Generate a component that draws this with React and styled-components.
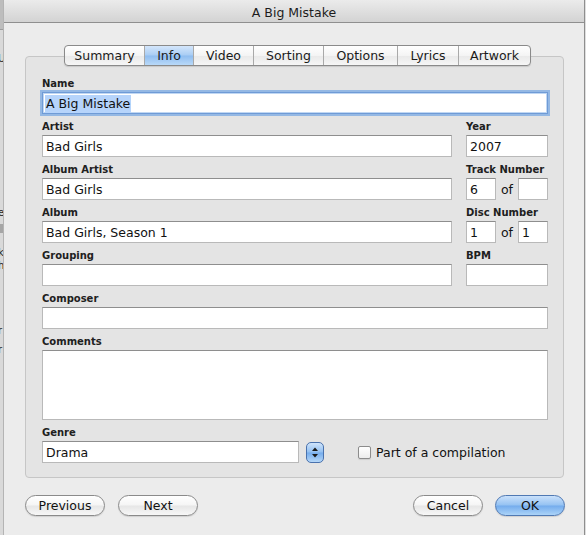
import React from "react";
import styled, { createGlobalStyle } from "styled-components";

const GlobalStyle = createGlobalStyle`
  html, body {
    margin: 0;
    padding: 0;
  }
  body {
    width: 586px;
    height: 535px;
    overflow: hidden;
    font-family: "DejaVu Sans", "Liberation Sans", sans-serif;
    color: #111111;
    background: #d4d4d4;
  }
`;

const Screen = styled.div`
  display: flex;
  width: 586px;
  height: 535px;
  overflow: hidden;
`;

const BackLeft = styled.div`
  width: 3px;
  flex: none;
  display: flex;
  flex-direction: column;
  overflow: hidden;
  background: #d9d9d9;
  border-right: 1px solid #b4b4b4;
`;

const BackRow = styled.div`
  height: ${(p) => p.$h}px;
  flex: none;
  background: ${(p) => p.$bg || "transparent"};
  border-bottom: ${(p) => (p.$line ? "1px solid #9c9c9c" : "none")};
  font-size: 10px;
  line-height: ${(p) => p.$h}px;
  white-space: nowrap;
  overflow: hidden;
  margin-left: -2px;
  color: #222222;
`;

const BackRight = styled.div`
  width: 1px;
  flex: none;
  background: #dedede;
  border-left: 1px solid #8e8e8e;
`;

const Dialog = styled.div`
  flex: 1;
  display: flex;
  flex-direction: column;
  background: #ececec;
`;

const TitleBar = styled.div`
  height: 20px;
  padding-top: 2px;
  flex: none;
  display: flex;
  align-items: center;
  justify-content: center;
  border-bottom: 1px solid #8f8f8f;
  border-radius: 4px 4px 0 0;
  background: linear-gradient(#ebebeb, #d3d3d3);
  font-size: 12.5px;
  color: #1c1c1c;
`;

const Body = styled.div`
  display: flex;
  flex-direction: column;
  padding: 22px 19px 0 21px;
`;

const TabBar = styled.div`
  position: relative;
  z-index: 1;
  align-self: flex-start;
  display: flex;
  height: 21px;
  box-sizing: border-box;
  margin: 0 0 -10px 39px;
  border: 1px solid #8a8a8a;
  border-radius: 4px;
  overflow: hidden;
  background: linear-gradient(#ffffff, #f4f4f4 50%, #e9e9e9 51%, #f6f6f6);
  box-shadow: 0 1px 1px rgba(0, 0, 0, 0.12);
`;

const Tab = styled.div`
  width: ${(p) => p.$w}px;
  box-sizing: border-box;
  display: flex;
  align-items: center;
  justify-content: center;
  font-size: 12.5px;
  color: #1a1a1a;
  border-left: ${(p) => (p.$first ? "none" : "1px solid #a9a9a9")};
  background: ${(p) =>
    p.$active
      ? "linear-gradient(#d4e6fb, #a9cdf4 48%, #8fbdf0 52%, #b9d9f8)"
      : "transparent"};
`;

const GroupBox = styled.div`
  margin-right: 1px;
  border: 1px solid #c6c6c6;
  border-radius: 4px;
  background: #e4e4e4;
  padding: 21px 15px 14px 16px;
  display: grid;
  grid-template-columns: 410px 82px;
  column-gap: 14px;
  row-gap: 7px;
`;

const Field = styled.div`
  display: flex;
  flex-direction: column;
  grid-column: ${(p) => (p.$wide ? "1 / span 2" : "auto")};
`;

const Label = styled.div`
  height: 14px;
  font-size: 10px;
  font-weight: bold;
  line-height: 11px;
  color: #202020;
  white-space: nowrap;
`;

const TextBox = styled.div`
  box-sizing: border-box;
  height: ${(p) => p.$h || 22}px;
  width: ${(p) => (p.$w ? `${p.$w}px` : "auto")};
  flex: none;
  padding: 2px 3px 0;
  background: #ffffff;
  border: 1px solid #b9b9b9;
  border-top-color: #8e8e8e;
  font-size: 12.5px;
  line-height: 18px;
  color: #111111;
  white-space: nowrap;
  overflow: hidden;
  ${(p) =>
    p.$focus &&
    `
    border-color: #6f9bd6;
    box-shadow: 0 0 0 2px rgba(128, 172, 228, 0.8), inset 0 0 0 1px rgba(150, 188, 235, 0.6);
    padding-left: 2px;
  `}
`;

const Selected = styled.span`
  background: #b6d4fb;
  padding: 1px 1px 2px;
`;

const Pair = styled.div`
  display: flex;
  align-items: center;
  justify-content: space-between;
`;

const Of = styled.span`
  font-size: 12.5px;
  color: #111111;
`;

const GenreRow = styled.div`
  display: flex;
  align-items: center;
`;

const Stepper = styled.div`
  width: 18px;
  height: 21px;
  box-sizing: border-box;
  margin-left: 7px;
  border: 1px solid #4a72ad;
  border-radius: 5px;
  background: linear-gradient(#cfe4fb, #93c0f1 48%, #75acec 52%, #b5d7f8);
  display: flex;
  align-items: center;
  justify-content: center;
`;

const CheckWrap = styled.div`
  display: flex;
  align-items: center;
  gap: 5px;
  margin-left: 34px;
  font-size: 12.5px;
  color: #111111;
`;

const CheckBox = styled.div`
  width: 13px;
  height: 13px;
  box-sizing: border-box;
  border: 1px solid #8c8c8c;
  border-radius: 2px;
  background: linear-gradient(#ffffff, #ececec);
  box-shadow: 0 1px 1px rgba(0, 0, 0, 0.1);
`;

const ButtonRow = styled.div`
  display: flex;
  gap: 13px;
  margin-top: 17px;
`;

const Spacer = styled.div`
  flex: 1;
`;

const PushButton = styled.div`
  width: ${(p) => p.$w}px;
  height: 21px;
  box-sizing: border-box;
  display: flex;
  align-items: center;
  justify-content: center;
  border: 1px solid ${(p) => (p.$primary ? "#5079b3" : "#8a8a8a")};
  border-radius: 11px;
  background: ${(p) =>
    p.$primary
      ? "linear-gradient(#cae1fb, #95c2f2 48%, #74aced 52%, #abd3f8)"
      : "linear-gradient(#ffffff, #f5f5f5 48%, #e6e6e6 52%, #f7f7f7)"};
  box-shadow: 0 1px 1px rgba(0, 0, 0, 0.12);
  font-size: 12.5px;
  color: #111111;
  margin-left: ${(p) => (p.$tight ? "-1px" : "0")};
`;

const StepArrows = () => (
  <svg width="8" height="13" viewBox="0 0 8 13">
    <polygon points="4,1.5 7,5 1,5" fill="#1a1a1a" />
    <polygon points="1,8 7,8 4,11.5" fill="#1a1a1a" />
  </svg>
);

const backRows = [
  { h: 29, bg: "#bdbdbd", line: true },
  { h: 22 },
  { h: 14, t: "U" },
  { h: 140 },
  { h: 14, t: "e" },
  { h: 4 },
  { h: 9, bg: "#a6a6a6" },
  { h: 13 },
  { h: 13, t: "k" },
  { h: 13, t: "h" },
  { h: 52 },
  { h: 14, t: "r" },
  { h: 5 },
  { h: 14, t: "r" },
  { h: 190 },
];

const tabs = [
  ["Summary", 79],
  ["Info", 49],
  ["Video", 60],
  ["Sorting", 70],
  ["Options", 74],
  ["Lyrics", 61],
  ["Artwork", 72],
];

const App = () => (
  <>
    <GlobalStyle />
    <Screen>
      <BackLeft>
        {backRows.map((r, i) => (
          <BackRow key={i} $h={r.h} $bg={r.bg} $line={r.line}>
            {r.t || ""}
          </BackRow>
        ))}
      </BackLeft>
      <Dialog>
        <TitleBar>A Big Mistake</TitleBar>
        <Body>
          <TabBar>
            {tabs.map(([name, w], i) => (
              <Tab key={name} $w={w} $first={i === 0} $active={name === "Info"}>
                {name}
              </Tab>
            ))}
          </TabBar>
          <GroupBox>
            <Field $wide>
              <Label>Name</Label>
              <TextBox $focus>
                <Selected>A Big Mistake</Selected>
              </TextBox>
            </Field>

            <Field>
              <Label>Artist</Label>
              <TextBox>Bad Girls</TextBox>
            </Field>
            <Field>
              <Label>Year</Label>
              <TextBox>2007</TextBox>
            </Field>

            <Field>
              <Label>Album Artist</Label>
              <TextBox>Bad Girls</TextBox>
            </Field>
            <Field>
              <Label>Track Number</Label>
              <Pair>
                <TextBox $w={30}>6</TextBox>
                <Of>of</Of>
                <TextBox $w={30} />
              </Pair>
            </Field>

            <Field>
              <Label>Album</Label>
              <TextBox>Bad Girls, Season 1</TextBox>
            </Field>
            <Field>
              <Label>Disc Number</Label>
              <Pair>
                <TextBox $w={30}>1</TextBox>
                <Of>of</Of>
                <TextBox $w={30}>1</TextBox>
              </Pair>
            </Field>

            <Field>
              <Label>Grouping</Label>
              <TextBox />
            </Field>
            <Field>
              <Label>BPM</Label>
              <TextBox />
            </Field>

            <Field $wide>
              <Label>Composer</Label>
              <TextBox />
            </Field>

            <Field $wide>
              <Label>Comments</Label>
              <TextBox $h={70} />
            </Field>

            <Field $wide>
              <Label>Genre</Label>
              <GenreRow>
                <TextBox $w={257}>Drama</TextBox>
                <Stepper>
                  <StepArrows />
                </Stepper>
                <CheckWrap>
                  <CheckBox />
                  Part of a compilation
                </CheckWrap>
              </GenreRow>
            </Field>
          </GroupBox>

          <ButtonRow>
            <PushButton $w={80}>Previous</PushButton>
            <PushButton $w={80}>Next</PushButton>
            <Spacer />
            <PushButton $w={70}>Cancel</PushButton>
            <PushButton $w={70} $primary $tight>
              OK
            </PushButton>
          </ButtonRow>
        </Body>
      </Dialog>
      <BackRight />
    </Screen>
  </>
);

export default App;
